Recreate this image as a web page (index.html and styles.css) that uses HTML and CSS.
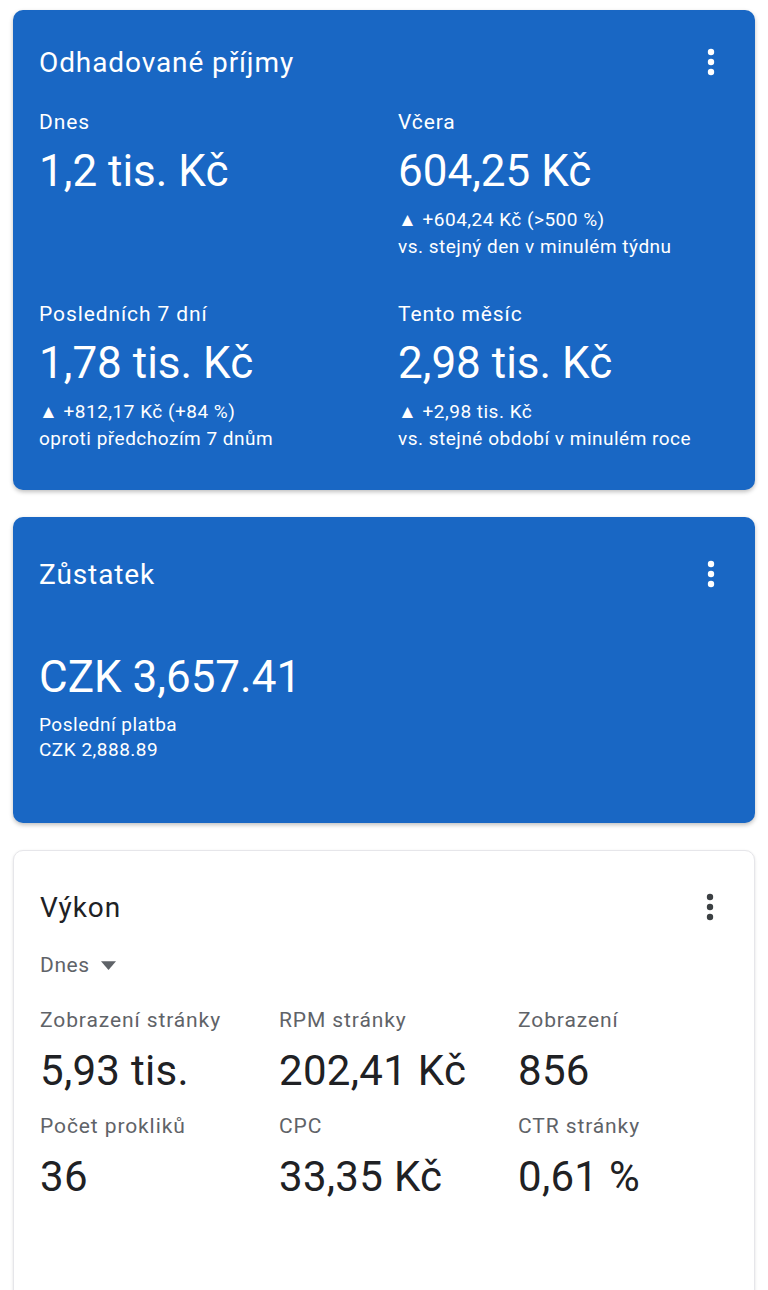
FILE: index.html
```html
<!DOCTYPE html>
<html lang="cs">
<head>
<meta charset="utf-8">
<link rel="stylesheet" href="styles.css">
</head>
<body>
<main class="page">
  <section class="card card-blue card-earn">
    <header class="card-head">
      <h2 class="card-title">Odhadované příjmy</h2>
      <span class="kebab"><svg viewBox="0 0 8 28" width="8" height="28"><circle cx="4" cy="4" r="3.2"/><circle cx="4" cy="14" r="3.2"/><circle cx="4" cy="24" r="3.2"/></svg></span>
    </header>
    <div class="earn-grid">
      <div class="stat">
        <div class="stat-label">Dnes</div>
        <div class="stat-big">1,2 tis. Kč</div>
      </div>
      <div class="stat">
        <div class="stat-label">Včera</div>
        <div class="stat-big">604,25 Kč</div>
        <div class="stat-sub">▲ +604,24 Kč (&gt;500 %)</div>
        <div class="stat-sub">vs. stejný den v minulém týdnu</div>
      </div>
      <div class="stat">
        <div class="stat-label">Posledních 7 dní</div>
        <div class="stat-big">1,78 tis. Kč</div>
        <div class="stat-sub">▲ +812,17 Kč (+84 %)</div>
        <div class="stat-sub">oproti předchozím 7 dnům</div>
      </div>
      <div class="stat">
        <div class="stat-label">Tento měsíc</div>
        <div class="stat-big">2,98 tis. Kč</div>
        <div class="stat-sub">▲ +2,98 tis. Kč</div>
        <div class="stat-sub">vs. stejné období v minulém roce</div>
      </div>
    </div>
  </section>

  <section class="card card-blue card-balance">
    <header class="card-head">
      <h2 class="card-title">Zůstatek</h2>
      <span class="kebab"><svg viewBox="0 0 8 28" width="8" height="28"><circle cx="4" cy="4" r="3.2"/><circle cx="4" cy="14" r="3.2"/><circle cx="4" cy="24" r="3.2"/></svg></span>
    </header>
    <div class="balance-big">CZK 3,657.41</div>
    <div class="balance-sub balance-sub-first">Poslední platba</div>
    <div class="balance-sub">CZK 2,888.89</div>
  </section>

  <section class="card card-white card-perf">
    <header class="card-head">
      <h2 class="card-title">Výkon</h2>
      <span class="kebab kebab-dark"><svg viewBox="0 0 8 28" width="8" height="28"><circle cx="4" cy="4" r="3.2"/><circle cx="4" cy="14" r="3.2"/><circle cx="4" cy="24" r="3.2"/></svg></span>
    </header>
    <div class="range">Dnes <svg class="caret" viewBox="0 0 12 7" width="15" height="9"><path d="M0 0h12L6 7z"/></svg></div>
    <div class="perf-grid">
      <div class="perf">
        <div class="perf-label">Zobrazení stránky</div>
        <div class="perf-value">5,93 tis.</div>
      </div>
      <div class="perf">
        <div class="perf-label">RPM stránky</div>
        <div class="perf-value">202,41 Kč</div>
      </div>
      <div class="perf">
        <div class="perf-label">Zobrazení</div>
        <div class="perf-value">856</div>
      </div>
      <div class="perf">
        <div class="perf-label">Počet prokliků</div>
        <div class="perf-value">36</div>
      </div>
      <div class="perf">
        <div class="perf-label">CPC</div>
        <div class="perf-value">33,35 Kč</div>
      </div>
      <div class="perf">
        <div class="perf-label">CTR stránky</div>
        <div class="perf-value">0,61 %</div>
      </div>
    </div>
  </section>
</main>
</body>
</html>
```

FILE: styles.css
```css
* { box-sizing: border-box; }
html, body { margin: 0; padding: 0; background: #ffffff; }
body {
  font-family: Roboto, "Noto Sans", sans-serif;
  width: 768px;
  height: 1290px;
  overflow: hidden;
}
.page {
  display: flex;
  flex-direction: column;
  gap: 27px;
  padding: 10px 13px 0 13px;
}
.card {
  border-radius: 10px;
  padding: 0 26px;
}
.card-blue {
  background: #1967c4;
  color: #ffffff;
  box-shadow: 0 2px 4px rgba(0,0,0,0.25);
}
.card-white {
  background: #ffffff;
  color: #202124;
  border: 1px solid #e6e6ea;
  box-shadow: 0 1px 3px rgba(0,0,0,0.12);
}
.card-head {
  display: flex;
  align-items: center;
  justify-content: space-between;
  height: 36px;
}
.card-title {
  margin: 0;
  font-weight: 400;
  font-size: 28px;
  letter-spacing: 0.9px;
}
.kebab { display: flex; margin-right: 14px; }
.kebab svg { fill: #ffffff; }
.kebab-dark svg { fill: #3c4043; }

.card-earn { padding-top: 34px; height: 480px; }
.earn-grid {
  display: grid;
  grid-template-columns: 359px 1fr;
  row-gap: 41px;
  margin-top: 29px;
}
.stat-label { font-size: 21px; line-height: 26px; letter-spacing: 0.9px; }
.stat-big {
  font-size: 44px;
  line-height: 52px;
  margin-top: 10px;
  margin-bottom: 9px;
}
.stat-sub { font-size: 19px; line-height: 27px; letter-spacing: 0.5px; }

.card-balance { padding-top: 39px; height: 306px; }
.balance-big {
  font-size: 44px;
  line-height: 52px;
  margin-top: 59px;
}
.balance-sub { font-size: 19px; line-height: 25px; letter-spacing: 0.5px; }
.balance-sub-first { margin-top: 9px; }

.card-perf { padding-top: 38px; height: 460px; }
.range {
  display: flex;
  align-items: center;
  gap: 11px;
  color: #5f6368;
  font-size: 21px;
  letter-spacing: 0.6px;
  margin-top: 28px;
}
.caret { fill: #5f6368; }
.perf-grid {
  display: grid;
  grid-template-columns: 239px 239px 1fr;
  row-gap: 17px;
  margin-top: 30px;
}
.perf-label { color: #5f6368; font-size: 21px; line-height: 26px; letter-spacing: 0.9px; }
.perf-value { font-size: 42px; line-height: 50px; margin-top: 13px; letter-spacing: 0.3px; }
```
